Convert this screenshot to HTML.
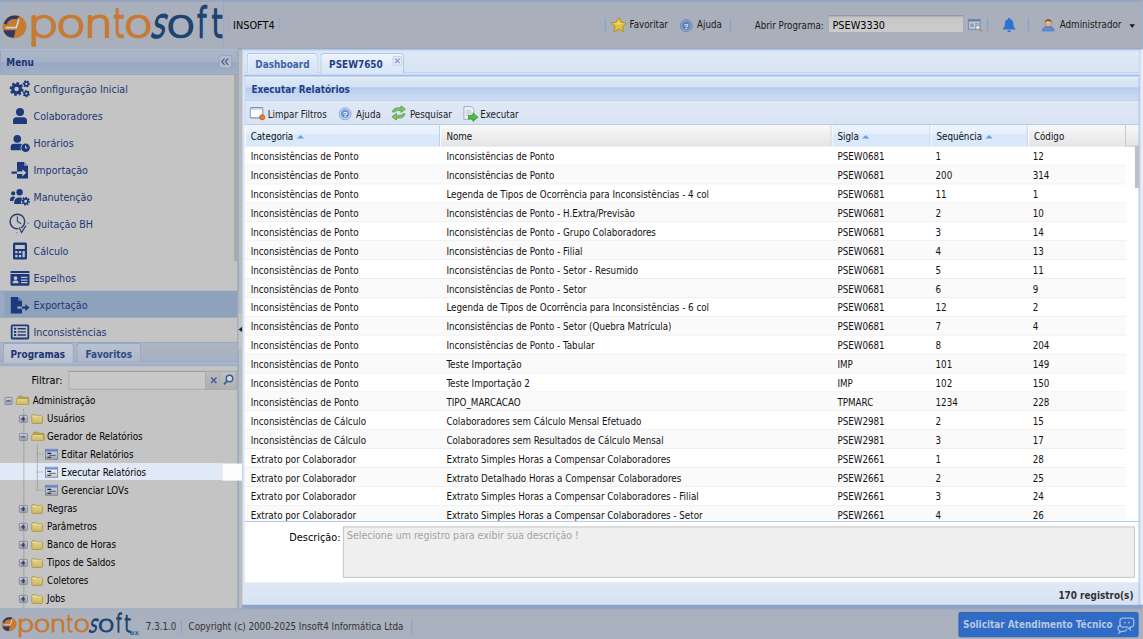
<!DOCTYPE html>
<html lang="pt-BR">
<head>
<meta charset="utf-8">
<title>Pontosoft - Executar Relatórios</title>
<style>
html,body{margin:0;padding:0;width:1143px;height:639px;overflow:hidden;background:#a9b0be;}
#app{position:absolute;left:0;top:0;width:1270px;height:710px;transform:scale(.9);transform-origin:0 0;overflow:hidden;background:#a9b0be;
 font-family:"DejaVu Sans Condensed","Liberation Sans",sans-serif;font-size:10.8px;color:#111;}
#app *{box-sizing:border-box;}
.abs,#app div,#app span,#app b,#app svg{position:absolute;}
/* ---------- top header ---------- */
#hdr{left:0;top:0;width:1270px;height:54.5px;background:#a9afbb;border-top:2px solid #94a6c2;border-bottom:1.5px solid #8d9fbc;border-right:2px solid #9fb0cb;border-left:1px solid #9fb0cb;}
#logo{left:0;top:0;width:248px;height:53px;border-right:1px solid #93a7c8;}
.tsep{width:1.1px;background:#7f9cd0;height:15px;top:18px;}
.ttxt{top:18.4px;height:16px;line-height:16px;white-space:nowrap;color:#1a1a1a;}
/* ---------- west ---------- */
#west{z-index:2;left:0;top:55.6px;width:264px;height:620.3px;background:#c4c4c4;overflow:hidden;}
#menuhd{left:0;top:0;width:264px;height:27.3px;background:linear-gradient(#abb6c9 0%,#a5b1c6 46%,#97a8c4 52%,#a0aec6 100%);border:1px solid #8fa3c4;border-bottom-color:#8e9fbe;}
#menuhd b{left:6px;top:6px;color:#1c3474;font-size:11px;line-height:13px;}
.mi{left:0;width:264px;height:30px;color:#1c3876;font-size:11.8px;line-height:30px;padding-left:37px;white-space:nowrap;}
.mi.sel{background:#8fa2bb;}
.mi svg{left:9px;top:4px;width:24px;height:22px;}
/* tree */
.tr{left:0;width:264px;height:20px;line-height:20px;white-space:nowrap;color:#000;}
.tr span{top:0;}
.tr.sel{background:#e6ecf7;}
.fold{width:17px;height:14px;top:4.2px;}
.tr .tt{top:2.1px;}
.tr .pm{width:9.4px;height:9.8px;top:6.2px;border:1px solid #7f889c;border-radius:1.5px;background:linear-gradient(#c9ced7,#98a1b1);}
.pm:before{content:"";position:absolute;left:1.2px;top:3.2px;width:5px;height:1.4px;background:#262f48;}
.pm.plus:after{content:"";position:absolute;left:3px;top:1.3px;width:1.4px;height:5.200px;background:#262f48;}
.wtab b{line-height:25px !important;}
/* ---------- center ---------- */
.row{left:271.5px;width:979.5px;height:21px;border-bottom:1px solid #ededed;line-height:19px;white-space:nowrap;background:#fff;}
.row.alt{background:#fafafa;}
.row span{top:2.6px;}
.c1{left:7px}.c2{left:224.5px}.c3{left:659px}.c4{left:768px}.c5{left:876px}
.hc{top:139px;height:23.5px;border-right:1px solid #c5c5c5;border-left:1px solid #fff;background:linear-gradient(#f9f9f9,#e3e4e6);line-height:26px;padding-left:6px;white-space:nowrap;}
.hc.sorted{background:linear-gradient(#ebf3fd 0%,#e6effc 40%,#d9e8fb 42%,#d9e8fb 100%);border-right-color:#aaccf6;}
.hc i{display:inline-block;width:0;height:0;border-left:4px solid transparent;border-right:4px solid transparent;border-bottom:4.5px solid #6f9de4;margin-left:4px;position:relative !important;top:-1.5px;}
.tb{top:120px;height:16px;line-height:16px;white-space:nowrap;color:#222;}
.mt{left:37.2px;top:.7px;}
.wtab{top:325.3px;height:21.2px;border:1px solid #8fa3c4;border-bottom:0;border-radius:4px 4px 0 0;background:linear-gradient(#b9c2d0,#adb8cb);text-align:center;}
.wtab b{position:static !important;color:#2d4a86;font-size:11px;line-height:20px;}
.wtab.act{background:linear-gradient(#c4cad4,#b9c1cf);height:22.5px;}
.wtab.act b{color:#1c3474;}
.ctab{top:59.1px;height:22px;border:1px solid #a9c4ec;border-bottom:0;border-radius:4px 4px 0 0;background:linear-gradient(#e6eefa,#d5e2f5);box-shadow:inset 1px 1px 0 #f4f8fd, inset -1px 0 0 #f4f8fd;}
.ctab b{left:9px;top:5.5px;font-size:11px;line-height:14px;white-space:nowrap;}
.ctab.act{background:linear-gradient(#f0f5fc,#dfe9f8 60%,#dae6f7);height:23px;box-shadow:none;}
.lg{font-family:"DejaVu Sans Light","DejaVu Sans","Liberation Sans",sans-serif;line-height:60px;white-space:nowrap;width:250px;height:53px;overflow:hidden;}
.lg span{transform-origin:0 75%;line-height:60px;}
.lg.lf span{transform-origin:0 64%;}
#split{z-index:2;}

</style>
</head>
<body>
<div id="app">
<div id="hdr">
 <div id="logo">
  <svg style="left:0;top:0" width="248.900" height="53.300" viewBox="0 0 224 48">
   <ellipse cx="13.500" cy="25" rx="12" ry="11.500" transform="rotate(-20 13.500 25)" fill="#c77a31"/>
   <path d="M3 22 C4.500 15.500 11 12 18.500 14.300 L15.500 17.500 C11 16.500 7 18.500 5.500 23 Z" fill="#2b3a66"/>
   <path d="M2.500 28.500 L14.500 28.500 L13 35.500 C8 36.500 4 33.500 2.500 28.500Z" fill="#2b3a66"/>
   <path d="M4.500 25.800 L15.300 25.800 L18 17.500" stroke="#cfd3dc" stroke-width="1.600" fill="none"/>
  </svg>
 <div class="lg" style="left:0;top:0;font-size:44px;-webkit-text-stroke:2.2px #c77a31;color:#c77a31"><span style="left:29.1px;top:-6.2px;transform:scaleX(1.276);-webkit-text-stroke-width:1.90px">p</span><span style="left:61.3px;top:-6.2px;transform:scaleX(1.263);-webkit-text-stroke-width:1.91px">o</span><span style="left:91.7px;top:-6.2px;transform:scaleX(1.174);-webkit-text-stroke-width:2.00px">n</span><span style="left:124.5px;top:-6.2px;transform:scaleX(0.699);-webkit-text-stroke-width:2.73px">t</span><span style="left:136.1px;top:-6.2px;transform:scaleX(1.247);-webkit-text-stroke-width:1.93px">o</span></div><div class="lg" style="left:0;top:0;font-size:44px;-webkit-text-stroke:2.2px #1d446e;color:#1d446e"><span style="left:164.5px;top:-6.2px;transform:scaleX(0.721) skewX(-20deg);-webkit-text-stroke-width:2.68px">s</span><span style="left:183.0px;top:-6.2px;transform:scaleX(1.263);-webkit-text-stroke-width:1.91px">o</span><span style="left:218.2px;top:-6.2px;transform:scaleX(0.681) scaleY(1.05);-webkit-text-stroke-width:2.77px">f</span><span style="left:233.7px;top:-6.2px;transform:scaleX(0.729);-webkit-text-stroke-width:2.66px">t</span></div><div style="left:34.300px;top:45px;width:4.400px;height:4.700px;background:#c77a31;border-radius:0 0 1.500px 1.500px"></div>
 </div>
 <div class="ttxt" style="left:258px;font-size:12px;color:#000">INSOFT4</div>
 <div class="tsep" style="left:253px;opacity:.5"></div><div class="tsep" style="left:309px;opacity:.5"></div>
 <div class="tsep" style="left:671.3px"></div>
 <svg style="left:676.8px;top:16px" width="19" height="19" viewBox="0 0 19 19"><path d="M9.5 1.2 L12.1 6.6 L18 7.4 L13.7 11.5 L14.8 17.4 L9.5 14.5 L4.2 17.4 L5.3 11.5 L1 7.4 L6.9 6.6 Z" fill="#e2c23a" stroke="#b08e1c" stroke-width="1" stroke-linejoin="round"/><path d="M9.5 3.6 L11.3 7.6 L15.6 8.2 L9.5 9.5 L3.6 8.2 L7.7 7.6Z" fill="#f0dc7a" opacity=".8"/></svg>
 <div class="ttxt" style="left:698.5px">Favoritar</div>
 <svg style="left:754px;top:19px" width="15" height="15" viewBox="0 0 15 15"><circle cx="7.5" cy="7.5" r="6.7" fill="#8ea3c6" stroke="#6f87b3" stroke-width="1"/><circle cx="7.5" cy="7.5" r="4.6" fill="#5f7fb8"/><text x="7.5" y="11" font-size="9" font-weight="bold" font-family="Liberation Sans, sans-serif" text-anchor="middle" fill="#e8edf5">?</text></svg>
 <div class="ttxt" style="left:773.5px">Ajuda</div>
 <div class="tsep" style="left:809.7px"></div>
 <div class="ttxt" style="left:837.5px;top:18.9px">Abrir Programa:</div>
 <div style="left:918.8px;top:15.3px;width:151.2px;height:20.2px;background:linear-gradient(#bfbfc0 0,#c8c8c8 3px,#cbcbcb 100%);border:1px solid #a6aab2;border-top-color:#8c9099"></div>
 <div class="ttxt" style="left:924px;font-size:12px;color:#000">PSEW3330</div>
 <svg style="left:1074px;top:18px" width="17" height="16" viewBox="0 0 17 16"><rect x="1" y="1.5" width="13" height="11" fill="#c5ccd8" stroke="#6e83a8" stroke-width="1"/><rect x="1" y="1.5" width="13" height="2.5" fill="#6e83a8"/><rect x="3" y="6" width="4" height="4" fill="#8a9cbc"/><path d="M8.5 6.5h4M8.5 8.5h3" stroke="#6e83a8" stroke-width="1"/><circle cx="11.5" cy="10.5" r="2.6" fill="#dfe5ee" stroke="#7a8aa6" stroke-width="1"/><path d="M13.5 12.5l2.3 2.3" stroke="#b5834a" stroke-width="1.6"/></svg>
 <div class="tsep" style="left:1095.5px"></div>
 <svg style="left:1112px;top:16.500px" width="16.500" height="18" viewBox="0 0 17 19"><path d="M8.5 1.2c.8 0 1.3.6 1.3 1.3 2.4.6 3.7 2.6 3.7 5.2 0 3 .8 4.6 2.2 5.8v1H1.3v-1c1.400-1.200 2.200-2.800 2.200-5.800 0-2.600 1.300-4.600 3.700-5.200 0-.7.500-1.300 1.300-1.300z" fill="#2f72d6"/><path d="M6.400 15.600h4.200a2.100 2.100 0 0 1-4.200 0z" fill="#2f72d6"/></svg>
 <div class="tsep" style="left:1141px"></div>
 <svg style="left:1156px;top:17.500px" width="15.500" height="15.500" viewBox="0 0 17 17"><path d="M1.5 16c0-4 2.500-5.500 7-5.500s7 1.500 7 5.500z" fill="#5b8fd6" stroke="#3c6db5" stroke-width=".8"/><circle cx="8.500" cy="6.300" r="4" fill="#e0b48e" stroke="#a87850" stroke-width=".7"/><path d="M4.300 5.800c0-3 2-4.300 4.200-4.300s4.200 1.300 4.200 4.300c-1.200-1.500-2.500-2-4.200-2s-3 .5-4.200 2z" fill="#7a4a2a"/></svg>
 <div class="ttxt" style="left:1176.5px">Administrador</div>
 <div style="left:1254px;top:25px;width:0;height:0;border-left:3.5px solid transparent;border-right:3.5px solid transparent;border-top:4px solid #1a1a1a"></div>
</div>

<div style="left:0;top:54.400px;width:264px;height:1.500px;background:#b0bbcf"></div>
<svg width="0" height="0" style="left:0;top:0"><defs><linearGradient id="fg" x1="0" y1="0" x2="0" y2="1"><stop offset="0" stop-color="#e4d791"/><stop offset="1" stop-color="#cdb65c"/></linearGradient><linearGradient id="lg1" x1="0" y1="0" x2="0" y2="1"><stop offset="0" stop-color="#d8dbe2"/><stop offset="1" stop-color="#a4a9b4"/></linearGradient><linearGradient id="lg2" x1="0" y1="0" x2="0" y2="1"><stop offset="0" stop-color="#ffffff"/><stop offset="1" stop-color="#c9ccd3"/></linearGradient></defs></svg>
<div id="west">
 <div id="menuhd"><b>Menu</b><div style="left:241.5px;top:4px;width:15px;height:15px;border:1px solid #8c9fbf;border-radius:3px;background:#b4bccb"></div><svg style="left:243px;top:6px" width="12" height="11" viewBox="0 0 12 11"><path d="M5.500 2l-3 3.500 3 3.500M9.500 2l-3 3.500 3 3.500" fill="none" stroke="#4a5f8c" stroke-width="1.400"/></svg></div>
 <div id="menubody" style="left:0;top:27.3px;width:264px;height:297px;overflow:hidden">
  <div class="mi" style="top:0.6px"><svg viewBox="0 0 36 27" style="left:0;top:.500px;width:40px;height:30px" fill="#1c3a7b"><path fill-rule="evenodd" d="M23.60 13.48 L23.08 16.05 L21.33 15.79 L20.59 16.89 L21.49 18.41 L19.31 19.86 L18.26 18.43 L16.96 18.69 L16.52 20.40 L13.95 19.88 L14.21 18.13 L13.11 17.39 L11.59 18.29 L10.14 16.11 L11.57 15.06 L11.31 13.76 L9.60 13.32 L10.12 10.75 L11.87 11.01 L12.61 9.91 L11.71 8.39 L13.89 6.94 L14.94 8.37 L16.24 8.11 L16.68 6.40 L19.25 6.92 L18.99 8.67 L20.09 9.41 L21.61 8.51 L23.06 10.69 L21.63 11.74 L21.89 13.04Z M14.40 13.40 a2.20 2.20 0 1 0 4.40 0 a2.20 2.20 0 1 0 -4.40 0Z"/><path fill-rule="evenodd" d="M29.96 7.74 L29.77 9.57 L28.72 9.49 L28.20 10.22 L28.61 11.19 L26.93 11.95 L26.48 10.99 L25.59 10.90 L24.95 11.75 L23.46 10.67 L24.06 9.80 L23.69 8.98 L22.64 8.86 L22.83 7.03 L23.88 7.11 L24.40 6.38 L23.99 5.41 L25.67 4.65 L26.12 5.61 L27.01 5.70 L27.65 4.85 L29.14 5.93 L28.54 6.80 L28.91 7.62Z M25.20 8.30 a1.10 1.10 0 1 0 2.20 0 a1.10 1.10 0 1 0 -2.20 0Z"/><path fill-rule="evenodd" d="M29.96 18.55 L29.24 20.24 L28.26 19.85 L27.55 20.40 L27.65 21.44 L25.83 21.67 L25.68 20.63 L24.85 20.28 L24.00 20.89 L22.89 19.43 L23.71 18.78 L23.60 17.88 L22.64 17.45 L23.36 15.76 L24.34 16.15 L25.05 15.60 L24.95 14.56 L26.77 14.33 L26.92 15.37 L27.75 15.72 L28.60 15.11 L29.71 16.57 L28.89 17.22 L29.00 18.12Z M25.20 18.00 a1.10 1.10 0 1 0 2.20 0 a1.10 1.10 0 1 0 -2.20 0Z"/></svg><span class="mt">Configuração Inicial</span></div>
  <div class="mi" style="top:30.6px"><svg viewBox="0 0 36 27" style="left:0;top:.500px;width:40px;height:30px" fill="#1c3a7b"><circle cx="20.00" cy="9.50" r="4.00"/><path d="M13.00 20.30 v-2.00 a3.60 3.60 0 0 1 3.60 -3.60 h6.80 a3.60 3.60 0 0 1 3.60 3.60 v2.00 a1.2 1.2 0 0 1 -1.2 1.2 h-11.60 a1.2 1.2 0 0 1 -1.2 -1.2z"/></svg><span class="mt">Colaboradores</span></div>
  <div class="mi" style="top:60.6px"><svg viewBox="0 0 36 27" style="left:0;top:.500px;width:40px;height:30px" fill="#1c3a7b"><circle cx="17.30" cy="9.30" r="3.80"/><path d="M10.65 19.50 v-1.84 a3.42 3.42 0 0 1 3.42 -3.42 h6.46 a3.42 3.42 0 0 1 3.42 3.42 v1.84 a1.2 1.2 0 0 1 -1.2 1.2 h-10.90 a1.2 1.2 0 0 1 -1.2 -1.2z"/><circle cx="25.6" cy="18.2" r="5.1" fill="#c4c4c4"/><circle cx="25.6" cy="18.2" r="4.3"/><path d="M25.6 15.8v2.6h2" stroke="#c4c4c4" stroke-width="1.1" fill="none"/></svg><span class="mt">Horários</span></div>
  <div class="mi" style="top:90.6px"><svg viewBox="0 0 36 27" style="left:0;top:.500px;width:40px;height:30px" fill="#1c3a7b"><path d="M17 5.5h7l4 4v12.5h-11v-4.6h5.3v2.4l4-3.6-4-3.6v2.4h-5.3z"/><path d="M11.500 14.800h5.500v2.400h-5.500z"/><path d="M24 5.500l4 4h-4z" fill="#c4c4c4" opacity=".55"/></svg><span class="mt">Importação</span></div>
  <div class="mi" style="top:120.6px"><svg viewBox="0 0 36 27" style="left:0;top:.500px;width:40px;height:30px" fill="#1c3a7b"><circle cx="13.2" cy="9.8" r="2.1"/><circle cx="19.600" cy="8.600" r="3.200"/><path d="M10 16.500c0-2.300 1.300-3.500 3.200-3.500 1 0 1.600.3 2 .8-1.300 1-1.800 2-1.800 3.700h-3.400z"/><path d="M14.200 20.500v-2c0-3 2-4.700 5.400-4.700 1.200 0 2.200.3 3 .8-1.800 1.300-2.300 3.500-1.200 5.900z"/><path fill-rule="evenodd" d="M30.10 17.65 L29.76 19.30 L28.37 19.00 L27.93 19.64 L28.75 20.82 L27.34 21.75 L26.57 20.54 L25.81 20.69 L25.55 22.10 L23.90 21.76 L24.20 20.37 L23.56 19.93 L22.38 20.75 L21.45 19.34 L22.66 18.57 L22.51 17.81 L21.10 17.55 L21.44 15.90 L22.83 16.20 L23.27 15.56 L22.45 14.38 L23.86 13.45 L24.63 14.66 L25.39 14.51 L25.65 13.10 L27.30 13.44 L27.00 14.83 L27.64 15.27 L28.82 14.45 L29.75 15.86 L28.54 16.63 L28.69 17.39Z M24.10 17.60 a1.50 1.50 0 1 0 3.00 0 a1.50 1.50 0 1 0 -3.00 0Z"/></svg><span class="mt">Manutenção</span></div>
  <div class="mi" style="top:150.6px"><svg viewBox="0 0 36 27" style="left:0;top:.500px;width:40px;height:30px" fill="#1c3a7b"><g fill="none" stroke="#2f3f72" stroke-width="1.500"><circle cx="17.400" cy="10.900" r="7.300"/><path d="M17.400 5.900v5l3.600 2.200" stroke-width="1.100"/><path d="M19.200 16.800l2.400 5.200 4.300-7" stroke="#c4c4c4" stroke-width="2.600"/><path d="M19.200 16.800l2.400 5.200 4.300-7" stroke-width="1.200"/></g><circle cx="28" cy="12.700" r=".7" fill="#5a6890"/><path d="M15.800 22.200h1.800" stroke="#5a6890" stroke-width=".8"/></svg><span class="mt">Quitação BH</span></div>
  <div class="mi" style="top:180.6px"><svg viewBox="0 0 36 27" style="left:0;top:.500px;width:40px;height:30px" fill="#1c3a7b"><path fill-rule="evenodd" d="M14.500 5h11a1.500 1.500 0 0 1 1.500 1.500v14a1.500 1.500 0 0 1-1.500 1.500h-11a1.500 1.500 0 0 1-1.500-1.500v-14a1.500 1.500 0 0 1 1.500-1.500z M15.200 7.300v4h9.600v-4z M15.200 13.500v2.200h2.300v-2.200z M18.850 13.500v2.200h2.300v-2.200z M22.500 13.500v6.200h2.300v-6.200z M15.200 17.500v2.200h2.300v-2.200z M18.850 17.500v2.200h2.300v-2.200z"/></svg><span class="mt">Cálculo</span></div>
  <div class="mi" style="top:210.6px"><svg viewBox="0 0 36 27" style="left:0;top:.500px;width:40px;height:30px" fill="#1c3a7b"><path fill-rule="evenodd" d="M10.500 6.300h19v2.200h-19z M10.500 9.500h19v10.200a1.500 1.500 0 0 1-1.500 1.500h-16a1.500 1.500 0 0 1-1.500-1.500z M15.500 11.600a1.900 1.900 0 1 0 .01 0z M12.600 18.600h5.900v-.8c0-1.300-1-2-2-2h-1.900c-1 0-2 .7-2 2z M21 12.200v1.300h6.500v-1.300z M21 14.800v1.300h6.500v-1.300z M21 17.400v1.300h6.500v-1.300z"/></svg><span class="mt">Espelhos</span></div>
  <div class="mi sel" style="top:240.6px"><div style="left:0;top:0;width:5px;height:30px;background:#98aac6"></div><svg viewBox="0 0 36 27" style="left:0;top:.500px;width:40px;height:30px" fill="#1c3a7b"><path d="M10.800 5.500h7.200l4 4v5.300h-4.700v2.400h4.700v4.800h-11.200z"/><path d="M18 5.500l4 4h-4z" fill="#8fa2bb" opacity=".55"/><path d="M22 14.800h3.400v-2.400l4 3.600-4 3.600v-2.400h-3.400z"/></svg><span class="mt">Exportação</span></div>
  <div class="mi" style="top:270.6px"><svg viewBox="0 0 36 27" style="left:0;top:.500px;width:40px;height:30px" fill="#1c3a7b"><path fill-rule="evenodd" d="M12.500 5.800h15a1.700 1.700 0 0 1 1.700 1.700v11.600a1.700 1.700 0 0 1-1.700 1.700h-15a1.700 1.700 0 0 1-1.700-1.700v-11.600a1.700 1.700 0 0 1 1.700-1.700z M12.600 7.600v11.400h14.800v-11.400z"/><path d="M14 9.200h2.200v2h-2.200z M14 12.300h2.200v2h-2.200z M14 15.400h2.200v2h-2.200z M17.600 9.500h8.200v1.400h-8.200z M17.600 12.600h8.200v1.400h-8.200z M17.600 15.700h8.200v1.400h-8.200z"/></svg><span class="mt">Inconsistências</span></div>
  <div style="left:259.700px;top:0;width:4.300px;height:207px;background:#a9a9a9"></div>
 </div>
 <div id="wtabs" style="left:0;top:324.500px;width:264px;height:23.500px;background:linear-gradient(#aeb5c2,#a6b0c2);border-top:1px solid #93a6c6;"></div>
 <div style="left:0;top:345.500px;width:264px;height:4.500px;background:#aab6cb;border-top:1px solid #8fa3c4;border-bottom:1px solid #8fa3c4"></div>
 <div class="wtab act" style="left:2.500px;width:79px"><b>Programas</b></div>
 <div class="wtab" style="left:84.500px;width:72.500px"><b>Favoritos</b></div>
 <div style="left:0;top:350px;width:264px;height:30px;background:#c4c4c4;border-top:1px solid #9aabc6"></div>
 <div style="left:35px;top:359.500px;font-size:12px;line-height:16px;color:#000">Filtrar:</div>
 <div style="left:76px;top:356px;width:153px;height:21px;background:#c8c8c8;border:1px solid #a3a8b0;border-top-color:#8d9198"></div>
 <div style="left:229px;top:356px;width:16px;height:21px;background:linear-gradient(#bcbcbe,#acadb0);border:1px solid #a0a3a9;border-left:0"></div>
 <div style="left:245px;top:356px;width:17.500px;height:21px;background:linear-gradient(#c0c0c2,#b0b1b4);border:1px solid #a0a3a9;border-left:0"></div>
 <svg style="left:231.500px;top:361px" width="11" height="11" viewBox="0 0 11 11"><path d="M2.500 2.500l6 6M8.500 2.500l-6 6" stroke="#3c5c9a" stroke-width="1.600"/></svg>
 <svg style="left:246.500px;top:359px" width="14" height="14" viewBox="0 0 14 14"><circle cx="8" cy="5.500" r="3.600" fill="#d4d9e2" stroke="#3c5c9a" stroke-width="1.600"/><path d="M5.500 8.300l-3.700 3.900" stroke="#3c5c9a" stroke-width="2"/></svg>
 <div class="tr" style="top:378.8px"><span class="pm " style="left:4.8px"></span><svg class="fold" style="left:16.5px;width:16px;height:11.500px" viewBox="0 0 19 14"><path d="M3.500 3a1.500 1.500 0 0 1 1.500-1.500h4l1.500 1.500h6a1.500 1.500 0 0 1 1.500 1.500v7.500h-14.500z" fill="#c4a548" stroke="#a48a40" stroke-width="1"/><path d="M2.200 13.200c-1 0-1.500-.6-1.400-1.500l.7-6c.1-.8.600-1.200 1.400-1.200h12.300c.9 0 1.300.5 1.500 1.300l1 6c.1.900-.4 1.400-1.300 1.400z" fill="url(#fg)" stroke="#a8904a" stroke-width="1" stroke-linejoin="round"/></svg><span class="tt" style="left:36.3px">Administração</span></div>
 <div class="tr" style="top:398.8px"><span class="pm plus" style="left:21.3px"></span><svg class="fold" style="left:34.0px;width:14.500px;height:12px" viewBox="0 0 17 14"><path d="M1.500 3.500a1.500 1.500 0 0 1 1.500-1.500h4l1.500 1.500h5.500a1.500 1.500 0 0 1 1.500 1.500v7a1.500 1.500 0 0 1-1.500 1.500h-11a1.500 1.500 0 0 1-1.500-1.500z" fill="url(#fg)" stroke="#aa9450" stroke-width="1.100"/><path d="M2.500 4.600h12" stroke="#efe6b4" stroke-width="1" opacity=".8"/></svg><span class="tt" style="left:52.3px">Usuários</span></div>
 <div class="tr" style="top:418.8px"><span class="pm " style="left:21.3px"></span><svg class="fold" style="left:34.0px;width:16px;height:11.500px" viewBox="0 0 19 14"><path d="M3.500 3a1.500 1.500 0 0 1 1.500-1.500h4l1.500 1.500h6a1.500 1.500 0 0 1 1.500 1.500v7.500h-14.500z" fill="#c4a548" stroke="#a48a40" stroke-width="1"/><path d="M2.200 13.200c-1 0-1.500-.6-1.400-1.500l.7-6c.1-.8.600-1.200 1.400-1.200h12.300c.9 0 1.300.5 1.500 1.300l1 6c.1.900-.4 1.400-1.300 1.400z" fill="url(#fg)" stroke="#a8904a" stroke-width="1" stroke-linejoin="round"/></svg><span class="tt" style="left:52.3px">Gerador de Relatórios</span></div>
 <div class="tr" style="top:438.8px"><svg style="left:50.0px;top:3.300px;width:14.500px;height:13.300px" viewBox="0 0 17 14"><rect x=".5" y=".5" width="16" height="13" fill="url(#lg1)" stroke="#6a7690" stroke-width="1"/><rect x="1" y="1" width="15" height="2.600" fill="#5f80d6"/><path d="M3 6h5M3 11h5" stroke="#15181f" stroke-width="1.600"/><path d="M5.500 8.500h8.500" stroke="#3a3f4a" stroke-width="1"/></svg><span class="tt" style="left:68.2px">Editar Relatórios</span></div>
 <div class="tr sel" style="top:458.8px;width:246.500px;height:20px;background:linear-gradient(#c4c4c4 0,#c4c4c4 .8px,#e2e9f6 .8px,#e2e9f6 19.500px,#c4c4c4 19.500px)"><svg style="left:50.0px;top:3.300px;width:14.500px;height:13.300px" viewBox="0 0 17 14"><rect x=".5" y=".5" width="16" height="13" fill="url(#lg2)" stroke="#6a7690" stroke-width="1"/><rect x="1" y="1" width="15" height="2.600" fill="#6f92ee"/><path d="M3 6h5M3 11h5" stroke="#15181f" stroke-width="1.600"/><path d="M5.500 8.500h8.500" stroke="#3a3f4a" stroke-width="1"/></svg><span class="tt" style="left:68.2px">Executar Relatórios</span></div>
 <div class="tr" style="top:478.8px"><svg style="left:50.0px;top:3.300px;width:14.500px;height:13.300px" viewBox="0 0 17 14"><rect x=".5" y=".5" width="16" height="13" fill="url(#lg1)" stroke="#6a7690" stroke-width="1"/><rect x="1" y="1" width="15" height="2.600" fill="#5f80d6"/><path d="M3 6h5M3 11h5" stroke="#15181f" stroke-width="1.600"/><path d="M5.500 8.500h8.500" stroke="#3a3f4a" stroke-width="1"/></svg><span class="tt" style="left:68.2px">Gerenciar LOVs</span></div>
 <div class="tr" style="top:498.8px"><span class="pm plus" style="left:21.3px"></span><svg class="fold" style="left:34.0px;width:14.500px;height:12px" viewBox="0 0 17 14"><path d="M1.500 3.500a1.500 1.500 0 0 1 1.500-1.500h4l1.500 1.500h5.500a1.500 1.500 0 0 1 1.500 1.500v7a1.500 1.500 0 0 1-1.500 1.500h-11a1.500 1.500 0 0 1-1.500-1.500z" fill="url(#fg)" stroke="#aa9450" stroke-width="1.100"/><path d="M2.500 4.600h12" stroke="#efe6b4" stroke-width="1" opacity=".8"/></svg><span class="tt" style="left:52.3px">Regras</span></div>
 <div class="tr" style="top:518.8px"><span class="pm plus" style="left:21.3px"></span><svg class="fold" style="left:34.0px;width:14.500px;height:12px" viewBox="0 0 17 14"><path d="M1.500 3.500a1.500 1.500 0 0 1 1.500-1.500h4l1.500 1.500h5.500a1.500 1.500 0 0 1 1.500 1.500v7a1.500 1.500 0 0 1-1.500 1.500h-11a1.500 1.500 0 0 1-1.500-1.500z" fill="url(#fg)" stroke="#aa9450" stroke-width="1.100"/><path d="M2.500 4.600h12" stroke="#efe6b4" stroke-width="1" opacity=".8"/></svg><span class="tt" style="left:52.3px">Parâmetros</span></div>
 <div class="tr" style="top:538.8px"><span class="pm plus" style="left:21.3px"></span><svg class="fold" style="left:34.0px;width:14.500px;height:12px" viewBox="0 0 17 14"><path d="M1.500 3.500a1.500 1.500 0 0 1 1.500-1.500h4l1.500 1.500h5.500a1.500 1.500 0 0 1 1.500 1.500v7a1.500 1.500 0 0 1-1.500 1.500h-11a1.500 1.500 0 0 1-1.500-1.500z" fill="url(#fg)" stroke="#aa9450" stroke-width="1.100"/><path d="M2.500 4.600h12" stroke="#efe6b4" stroke-width="1" opacity=".8"/></svg><span class="tt" style="left:52.3px">Banco de Horas</span></div>
 <div class="tr" style="top:558.8px"><span class="pm plus" style="left:21.3px"></span><svg class="fold" style="left:34.0px;width:14.500px;height:12px" viewBox="0 0 17 14"><path d="M1.500 3.500a1.500 1.500 0 0 1 1.500-1.500h4l1.500 1.500h5.500a1.500 1.500 0 0 1 1.500 1.500v7a1.500 1.500 0 0 1-1.500 1.500h-11a1.500 1.500 0 0 1-1.500-1.500z" fill="url(#fg)" stroke="#aa9450" stroke-width="1.100"/><path d="M2.500 4.600h12" stroke="#efe6b4" stroke-width="1" opacity=".8"/></svg><span class="tt" style="left:52.3px">Tipos de Saldos</span></div>
 <div class="tr" style="top:578.8px"><span class="pm plus" style="left:21.3px"></span><svg class="fold" style="left:34.0px;width:14.500px;height:12px" viewBox="0 0 17 14"><path d="M1.500 3.500a1.500 1.500 0 0 1 1.500-1.500h4l1.500 1.500h5.500a1.500 1.500 0 0 1 1.500 1.500v7a1.500 1.500 0 0 1-1.500 1.500h-11a1.500 1.500 0 0 1-1.500-1.500z" fill="url(#fg)" stroke="#aa9450" stroke-width="1.100"/><path d="M2.500 4.600h12" stroke="#efe6b4" stroke-width="1" opacity=".8"/></svg><span class="tt" style="left:52.3px">Coletores</span></div>
 <div class="tr" style="top:598.8px"><span class="pm plus" style="left:21.3px"></span><svg class="fold" style="left:34.0px;width:14.500px;height:12px" viewBox="0 0 17 14"><path d="M1.500 3.500a1.500 1.500 0 0 1 1.500-1.500h4l1.500 1.500h5.500a1.500 1.500 0 0 1 1.500 1.500v7a1.500 1.500 0 0 1-1.500 1.500h-11a1.500 1.500 0 0 1-1.500-1.500z" fill="url(#fg)" stroke="#aa9450" stroke-width="1.100"/><path d="M2.500 4.600h12" stroke="#efe6b4" stroke-width="1" opacity=".8"/></svg><span class="tt" style="left:52.3px">Jobs</span></div>
 <div style="left:25.500px;top:398px;width:0;height:222px;border-left:1px dotted #7a7a7a"></div>
 <div style="left:41px;top:438px;width:0;height:51px;border-left:1px dotted #7a7a7a"></div>
 <div style="left:41px;top:448.8px;width:7px;height:0;border-top:1px dotted #8d8d8d"></div>
 <div style="left:41px;top:468.8px;width:7px;height:0;border-top:1px dotted #8d8d8d"></div>
 <div style="left:41px;top:488.8px;width:7px;height:0;border-top:1px dotted #8d8d8d"></div>
</div>
<div id="split" style="left:264px;top:55.600px;width:5.300px;height:620.300px;background:#bcbcbd;border-left:1.300px solid #8299c0"></div>
<div style="left:265.300px;top:348px;width:4px;height:40px;background:#c6c6c8;z-index:3"></div>
<div style="left:265px;top:362.500px;width:0;height:0;border-top:3.500px solid transparent;border-bottom:3.500px solid transparent;border-right:4px solid #222;z-index:3"></div>
<div style="left:246.500px;top:515.200px;width:22px;height:18.700px;background:#fdfdfe;z-index:3"></div>
<div id="center" style="left:269.3px;top:55.3px;width:998.2px;height:617.2px;background:#dce6f5;border:1px solid #a9c5ee;border-width:1.500px 1.500px 0 1.500px;border-left-color:#c3d5f1;"></div>
<!-- tab bar -->
<div style="left:271.300px;top:57.300px;width:994.700px;height:23px;background:linear-gradient(#dde7f6,#d8e3f4)"></div>
<div style="left:271.300px;top:80.200px;width:994.700px;height:5.300px;background:#d9e5f6;border-top:1px solid #c0d3ef;border-bottom:2px solid #a3c0ea"></div>
<div class="ctab" style="left:273.700px;width:79.100px;"><b style="color:#3d62a6">Dashboard</b></div>
<div class="ctab act" style="left:356.200px;width:93.200px;"><b style="color:#1f3f86;left:8.500px">PSEW7650</b>
 <svg style="left:78.500px;top:1.500px" width="11" height="11" viewBox="0 0 11 11"><rect x=".5" y=".5" width="10" height="10" rx="2" fill="#e4ecf8" stroke="#b5c8e6"/><path d="M3 3l5 5M8 3l-5 5" stroke="#8fa4c8" stroke-width="1.700"/></svg>
</div>
<!-- panel header -->
<div style="left:271.500px;top:85.500px;width:994px;height:26.300px;background:linear-gradient(#f0f5fc 0%,#dce7f6 6%,#d4e1f5 44%,#aac4eb 46%,#bccfee 51%,#cddcf3 100%);border-bottom:1px solid #b0c8ea;border-left:1px solid #c5d8f2"></div>
<b style="left:279.400px;top:92.500px;font-size:11px;line-height:14px;color:#1f3f86;white-space:nowrap">Executar Relatórios</b>
<!-- toolbar -->
<div style="left:271.500px;top:111.800px;width:994px;height:27.200px;background:linear-gradient(#dfe8f5,#d9e4f3);border-bottom:1px solid #b0c8ea;border-left:1px solid #c5d8f2"></div>
<svg style="left:277px;top:117.500px" width="19" height="17" viewBox="0 0 19 17"><rect x="1" y="1.500" width="14" height="11.500" rx="1" fill="#fff" stroke="#7f93b8" stroke-width="1.200"/><rect x="1.500" y="2" width="13" height="2" fill="#c7d3e8"/><circle cx="14.300" cy="12.300" r="2.900" fill="#ee7a2c" stroke="#c65a14" stroke-width=".8"/></svg>
<div class="tb" style="left:297.500px">Limpar Filtros</div>
<svg style="left:376px;top:118.500px" width="15" height="15" viewBox="0 0 15 15"><circle cx="7.500" cy="7.500" r="6.700" fill="#c3d3ee" stroke="#8aa6d6" stroke-width="1"/><circle cx="7.500" cy="7.500" r="4.700" fill="#6f94d6"/><text x="7.500" y="11" font-size="9" font-weight="bold" font-family="Liberation Sans, sans-serif" text-anchor="middle" fill="#fff">?</text></svg>
<div class="tb" style="left:395.500px">Ajuda</div>
<svg style="left:434px;top:117px" width="18" height="17" viewBox="0 0 18 17"><path d="M2 7.500c.5-3 3-4.700 6.500-4.700h3v-2.300l5 3.800-5 3.800v-2.300h-3c-2 0-3.300.5-4 1.700z" fill="#7cc36a" stroke="#4e9a3c" stroke-width=".8" stroke-linejoin="round"/><path d="M16 9.500c-.5 3-3 4.700-6.500 4.700h-3v2.300l-5-3.800 5-3.800v2.300h3c2 0 3.300-.5 4-1.700z" fill="#7cc36a" stroke="#4e9a3c" stroke-width=".8" stroke-linejoin="round"/></svg>
<div class="tb" style="left:455.500px">Pesquisar</div>
<svg style="left:513px;top:116.500px" width="19" height="19" viewBox="0 0 19 19"><path d="M2.500 1.500h8l3 3v11h-11z" fill="#f4f6fa" stroke="#9aa3b2" stroke-width="1"/><path d="M4.500 5.500h6M4.500 7.500h7M4.500 9.500h7M4.500 11.500h4" stroke="#b4bcc9" stroke-width="1"/><path d="M7.500 11.300h5v-2.800l5.500 4.700-5.500 4.700v-2.800h-5z" fill="#4fc04a" stroke="#2f8f2c" stroke-width=".9" stroke-linejoin="round"/></svg>
<div class="tb" style="left:533.500px">Executar</div>
<!-- grid header -->
<div style="left:271.500px;top:139px;width:994px;height:23.500px;background:linear-gradient(#f9f9f9,#e3e4e6);border-bottom:1px solid #c5c5c5"></div>
<div class="hc sorted" style="left:271.500px;width:217.500px">Categoria<i></i></div>
<div class="hc" style="left:489px;width:434.500px">Nome</div>
<div class="hc sorted" style="left:923.500px;width:110px">Sigla<i></i></div>
<div class="hc sorted" style="left:1033.500px;width:108.300px">Sequência<i></i></div>
<div class="hc" style="left:1141.800px;width:109.400px">Código</div>
<!-- grid body bg -->
<div style="left:271.500px;top:162.500px;width:994px;height:417px;background:#fff"></div>

<div id="gridbody" class="abs">
<div class="row" style="top:162.9px"><span class="c1">Inconsistências de Ponto</span><span class="c2">Inconsistências de Ponto</span><span class="c3">PSEW0681</span><span class="c4">1</span><span class="c5">12</span></div>
<div class="row alt" style="top:183.9px"><span class="c1">Inconsistências de Ponto</span><span class="c2">Inconsistências de Ponto</span><span class="c3">PSEW0681</span><span class="c4">200</span><span class="c5">314</span></div>
<div class="row" style="top:204.9px"><span class="c1">Inconsistências de Ponto</span><span class="c2">Legenda de Tipos de Ocorrência para Inconsistências - 4 col</span><span class="c3">PSEW0681</span><span class="c4">11</span><span class="c5">1</span></div>
<div class="row alt" style="top:225.9px"><span class="c1">Inconsistências de Ponto</span><span class="c2">Inconsistências de Ponto - H.Extra/Previsão</span><span class="c3">PSEW0681</span><span class="c4">2</span><span class="c5">10</span></div>
<div class="row" style="top:246.9px"><span class="c1">Inconsistências de Ponto</span><span class="c2">Inconsistências de Ponto - Grupo Colaboradores</span><span class="c3">PSEW0681</span><span class="c4">3</span><span class="c5">14</span></div>
<div class="row alt" style="top:267.9px"><span class="c1">Inconsistências de Ponto</span><span class="c2">Inconsistências de Ponto - Filial</span><span class="c3">PSEW0681</span><span class="c4">4</span><span class="c5">13</span></div>
<div class="row" style="top:288.9px"><span class="c1">Inconsistências de Ponto</span><span class="c2">Inconsistências de Ponto - Setor - Resumido</span><span class="c3">PSEW0681</span><span class="c4">5</span><span class="c5">11</span></div>
<div class="row alt" style="top:309.9px"><span class="c1">Inconsistências de Ponto</span><span class="c2">Inconsistências de Ponto - Setor</span><span class="c3">PSEW0681</span><span class="c4">6</span><span class="c5">9</span></div>
<div class="row" style="top:330.9px"><span class="c1">Inconsistências de Ponto</span><span class="c2">Legenda de Tipos de Ocorrência para Inconsistências - 6 col</span><span class="c3">PSEW0681</span><span class="c4">12</span><span class="c5">2</span></div>
<div class="row alt" style="top:351.9px"><span class="c1">Inconsistências de Ponto</span><span class="c2">Inconsistências de Ponto - Setor (Quebra Matrícula)</span><span class="c3">PSEW0681</span><span class="c4">7</span><span class="c5">4</span></div>
<div class="row" style="top:372.9px"><span class="c1">Inconsistências de Ponto</span><span class="c2">Inconsistências de Ponto - Tabular</span><span class="c3">PSEW0681</span><span class="c4">8</span><span class="c5">204</span></div>
<div class="row alt" style="top:393.9px"><span class="c1">Inconsistências de Ponto</span><span class="c2">Teste Importação</span><span class="c3">IMP</span><span class="c4">101</span><span class="c5">149</span></div>
<div class="row" style="top:414.9px"><span class="c1">Inconsistências de Ponto</span><span class="c2">Teste Importação 2</span><span class="c3">IMP</span><span class="c4">102</span><span class="c5">150</span></div>
<div class="row alt" style="top:435.9px"><span class="c1">Inconsistências de Ponto</span><span class="c2">TIPO_MARCACAO</span><span class="c3">TPMARC</span><span class="c4">1234</span><span class="c5">228</span></div>
<div class="row" style="top:456.9px"><span class="c1">Inconsistências de Cálculo</span><span class="c2">Colaboradores sem Cálculo Mensal Efetuado</span><span class="c3">PSEW2981</span><span class="c4">2</span><span class="c5">15</span></div>
<div class="row alt" style="top:477.9px"><span class="c1">Inconsistências de Cálculo</span><span class="c2">Colaboradores sem Resultados de Cálculo Mensal</span><span class="c3">PSEW2981</span><span class="c4">3</span><span class="c5">17</span></div>
<div class="row" style="top:498.9px"><span class="c1">Extrato por Colaborador</span><span class="c2">Extrato Simples Horas a Compensar Colaboradores</span><span class="c3">PSEW2661</span><span class="c4">1</span><span class="c5">28</span></div>
<div class="row alt" style="top:519.9px"><span class="c1">Extrato por Colaborador</span><span class="c2">Extrato Detalhado Horas a Compensar Colaboradores</span><span class="c3">PSEW2661</span><span class="c4">2</span><span class="c5">25</span></div>
<div class="row" style="top:540.9px"><span class="c1">Extrato por Colaborador</span><span class="c2">Extrato Simples Horas a Compensar Colaboradores - Filial</span><span class="c3">PSEW2661</span><span class="c4">3</span><span class="c5">24</span></div>
<div class="row alt" style="top:561.9px"><span class="c1">Extrato por Colaborador</span><span class="c2">Extrato Simples Horas a Compensar Colaboradores - Setor</span><span class="c3">PSEW2661</span><span class="c4">4</span><span class="c5">26</span></div>
</div>
<!-- grid scrollbar -->
<div style="left:1261px;top:162px;width:4.500px;height:47px;background:#c1c1c1"></div>
<div style="left:271.500px;top:578.500px;width:994px;height:1.500px;background:#a9c4ec"></div>
<!-- description -->
<div style="left:271.500px;top:580px;width:994px;height:67.500px;background:#fff"></div>
<div style="left:321.500px;top:589px;font-size:12px;line-height:16px;color:#000;white-space:nowrap">Descrição:</div>
<div style="left:381px;top:584.700px;width:880px;height:57.800px;background:#efefef;border:1px solid #c2c2c2"></div>
<div style="left:385.500px;top:588px;font-size:11.700px;line-height:15px;color:#a3a3a3;white-space:nowrap">Selecione um registro para exibir sua descrição !</div>
<!-- status bar -->
<div style="left:271.300px;top:647.400px;width:995px;height:25px;background:linear-gradient(#dfe8f6,#d7e2f4)"></div>
<b style="left:1176px;top:654.800px;font-size:11px;line-height:14px;color:#333;white-space:nowrap">170 registro(s)</b>
<div style="left:269.300px;top:672.300px;width:1000.700px;height:3.700px;background:#8da3c8;z-index:2"></div>
<div style="left:1267.300px;top:55.300px;width:2.700px;height:617px;background:#e6edf9"></div>
<div style="left:1265.200px;top:84.500px;width:1.300px;height:588px;background:#a9c5ee"></div>

<div id="ftr" style="left:0;top:675.300px;width:1270px;height:34.700px;background:#a9b0be;border-top:1px solid #96a6c3"><div style="left:0;top:0;width:1270px;height:1.200px;background:#96a6c3"></div>
 <svg style="left:0;top:-1.300px" width="160" height="36" viewBox="0 0 144 32.400">
   <ellipse cx="9.300" cy="16.800" rx="7.400" ry="6.900" transform="rotate(-20 9.300 16.800)" fill="#c77a31"/>
   <path d="M2.600 15 C3.500 11 7.500 8.800 12.300 10.200 L10.400 12.200 C7.500 11.600 5.200 12.800 4.300 15.600 Z" fill="#2b3a66"/>
   <path d="M2.400 19 L9.800 19 L8.900 23.300 C5.800 23.900 3.300 22 2.400 19Z" fill="#2b3a66"/>
   <path d="M3.600 17.300 L10.300 17.300 L12 12.200" stroke="#cfd3dc" stroke-width="1" fill="none"/>
   <text x="129.800" y="27.200" font-family="DejaVu Sans, sans-serif" font-size="6.800" font-weight="bold" fill="#2a6a94">ex</text>
 </svg><div class="lg lf" style="left:0;top:-20px;height:60px;font-size:25.7px;-webkit-text-stroke:1.30px #c77a31;color:#c77a31"><span style="left:18.4px;top:6.6px;transform:scaleX(1.269);-webkit-text-stroke-width:1.13px">p</span><span style="left:37.1px;top:6.6px;transform:scaleX(1.260);-webkit-text-stroke-width:1.13px">o</span><span style="left:55.1px;top:6.6px;transform:scaleX(1.166);-webkit-text-stroke-width:1.19px">n</span><span style="left:73.9px;top:6.6px;transform:scaleX(0.712);-webkit-text-stroke-width:1.59px">t</span><span style="left:80.8px;top:6.6px;transform:scaleX(1.245);-webkit-text-stroke-width:1.14px">o</span></div><div class="lg lf" style="left:0;top:-20px;height:60px;font-size:25.7px;-webkit-text-stroke:1.30px #1d446e;color:#1d446e"><span style="left:97.5px;top:6.6px;transform:scaleX(0.712) skewX(-20deg);-webkit-text-stroke-width:1.59px">s</span><span style="left:108.2px;top:6.6px;transform:scaleX(1.260);-webkit-text-stroke-width:1.13px">o</span><span style="left:128.9px;top:6.6px;transform:scaleX(0.668) scaleY(1.05);-webkit-text-stroke-width:1.66px">f</span><span style="left:137.8px;top:6.6px;transform:scaleX(0.742);-webkit-text-stroke-width:1.56px">t</span></div>
 <div style="left:162px;top:13.800px;line-height:14px;color:#333;white-space:nowrap">7.3.1.0</div>
 <div class="tsep" style="left:200.500px;top:12.500px;height:15px"></div>
 <div style="left:209.500px;top:13.800px;line-height:14px;color:#333;white-space:nowrap">Copyright (c) 2000-2025 Insoft4 Informática Ltda</div>
 <div class="tsep" style="left:457px;top:12.500px;height:15px"></div>
 <div style="left:1064.500px;top:3.800px;width:200.500px;height:28.200px;background:#306bc6;border:1px solid #2a5db0;border-radius:2px"></div>
 <b style="left:1070px;top:11.300px;font-size:11px;line-height:14px;color:#b9c7e2;white-space:nowrap">Solicitar Atendimento Técnico</b>
 <svg style="left:1240px;top:6.500px" width="22" height="22" viewBox="0 0 20 20"><path d="M7 3.500h8a3 3 0 0 1 3 3v3a3 3 0 0 1-3 3h-1l.5 2.500-3-2.500h-4.500a3 3 0 0 1-3-3v-3a3 3 0 0 1 3-3z" fill="none" stroke="#a9bbdc" stroke-width="1.300"/><path d="M5 10.500c-2 .3-3 1.500-3 3.200 0 1.200.7 2.200 1.800 2.700l-.5 2 2.200-1.600h2.500c1.500 0 2.500-.8 3-2" fill="none" stroke="#a9bbdc" stroke-width="1.300"/><circle cx="9" cy="8" r=".9" fill="#a9bbdc"/><circle cx="13" cy="8" r=".9" fill="#a9bbdc"/></svg>
</div>

</div>
</body>
</html>
